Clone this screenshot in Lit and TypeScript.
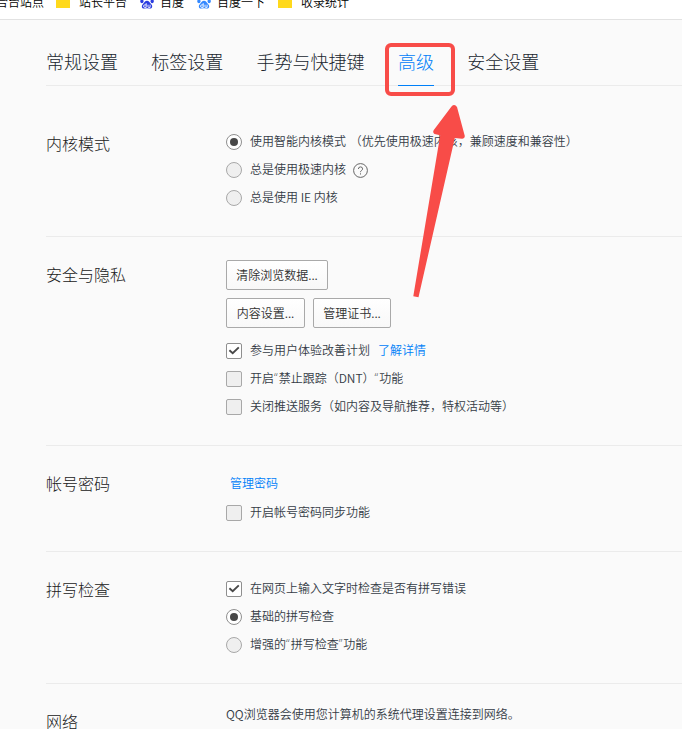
import { LitElement, html, svg, css, nothing } from "lit";
import { customElement, property } from "lit/decorators.js";
import { classMap } from "lit/directives/class-map.js";

const TABS = ["常规设置", "标签设置", "手势与快捷键", "高级", "安全设置"];

@customElement("option-row")
class OptionRow extends LitElement {
  @property() kind: "radio" | "check" = "check";
  @property({ type: Boolean }) checked = false;

  static styles = css`
    :host { display: flex; align-items: center; height: 28px; font-size: 12px; line-height: 16px; white-space: nowrap; }
    .box { box-sizing: border-box; width: 16px; height: 16px; flex: none; margin-right: 8px; border: 1px solid #a8a8a8; border-radius: 2px; background: #efefef; display: grid; place-items: center; }
    .radio { border-radius: 50%; }
    .on { background: #fff; border-color: #8f8f8f; }
    .dot { width: 8px; height: 8px; border-radius: 50%; background: #484848; }
    .tick { display: block; width: 14px; height: 14px; }
    .text { display: flex; align-items: center; padding-bottom: 2px; }
  `;

  render() {
    const mark = !this.checked ? nothing : this.kind === "radio"
      ? html`<span class="dot"></span>`
      : html`<svg class="tick" viewBox="0 0 14 14"><path d="M2.4 6.3 5.7 9.3 11.8 3.4" fill="none" stroke="#484848" stroke-width="1.9"/></svg>`;
    return html`<span class=${classMap({ box: true, radio: this.kind === "radio", on: this.checked })}>${mark}</span><span class="text"><slot></slot></span>`;
  }
}

@customElement("app-root")
class AppRoot extends LitElement {
  static styles = css`
    :host { display: block; position: relative; width: 682px; height: 729px; overflow: hidden; background: #fafafa; color: #353c46; font-family: "Noto Sans CJK SC", "Noto Sans", sans-serif; font-weight: 350; font-size: 12px; }
    .bookmarks { display: flex; height: 19px; overflow: hidden; background: #fff; border-bottom: 1px solid #e2e2e2; color: #000; font-weight: 350; }
    .mark { display: flex; align-items: center; flex: none; height: 16px; margin-top: -6px; line-height: 16px; white-space: nowrap; }
    .folder { width: 14px; height: 14px; margin: -2px 9px 0 0; background: #ffd91c; }
    .paw { width: 14px; height: 14px; margin: 0 6px 0 0; }
    .m0 { width: 60px; margin-left: -4px; }
    .m1 { width: 84px; }
    .m2 { width: 57px; }
    .m3 { width: 81px; }
    .panel { margin-left: 46px; }
    .tabs { display: flex; gap: 33.3px; height: 65px; border-bottom: 1px solid #ebebeb; font-size: 18px; font-weight: 300; line-height: 24px; color: #20262e; }
    .tab { box-sizing: border-box; height: 66px; padding-top: 29px; white-space: nowrap; }
    .active { color: #0080f8; border-bottom: 1px solid #0080f8; }
    .section { display: flex; padding: 23px 0 24px; border-bottom: 1px solid #ebebeb; }
    .kernel { padding-top: 42px; }
    .label { width: 180px; flex: none; margin-top: -1px; font-size: 16px; font-weight: 300; line-height: 31px; color: #202020; }
    .kernel .label { margin-top: 0; }
    .row { display: flex; gap: 8px; margin-bottom: 8px; }
    .wide { margin-bottom: 9px; }
    .btn { box-sizing: border-box; height: 30px; padding: 0; border: 1px solid #a9a9a9; border-radius: 2px; background: linear-gradient(#fff, #f8f8f8); font: inherit; color: #303030; line-height: 28px; text-align: center; }
    .b0 { width: 102px; } .b1 { width: 79px; } .b2 { width: 78px; }
    .link { color: #0080f8; }
    .inline { margin-left: 8px; }
    .alone { height: 30px; line-height: 28px; padding-left: 4px; }
    .help { width: 15px; height: 15px; margin: 2px 0 0 7px; }
    .aside { margin-left: 1px; }
    .quote { font-family: "Open Sans", "Noto Sans", sans-serif; margin-right: 1px; }
    .note { line-height: 16px; margin-top: -1px; white-space: nowrap; }
    .overlay { position: absolute; left: 0; top: 0; pointer-events: none; }
  `;

  paw(color: string) {
    return html`<svg class="paw" viewBox="0 0 14 14">${svg`<g fill=${color}><ellipse cx="5" cy="2.7" rx="1.7" ry="2.4"/><ellipse cx="9.3" cy="2.7" rx="1.7" ry="2.4"/><ellipse cx="1.9" cy="6.2" rx="1.6" ry="2"/><ellipse cx="12.2" cy="6.2" rx="1.6" ry="2"/><path d="M7 5.7C9 5.7 9.5 7.5 11 8.9 13.2 10.9 12.2 13.8 9.7 13.6Q7 13.1 4.3 13.6C1.8 13.8.9 10.9 3 8.9 4.5 7.5 5 5.7 7 5.7Z"/></g><path d="M6.2 8.2v4.2H4.8a1.2 1.2 0 0 1 0-2.5h1.4M8 9.7v2q0 .7.7.7h1.4V9.7" fill="none" stroke="#fff" stroke-width=".9"/>`}</svg>`;
  }

  render() {
    return html`
      <div class="bookmarks">
        <span class="mark m0">合台站点</span>
        <span class="mark m1"><span class="folder"></span>站长平台</span>
        <span class="mark m2">${this.paw("#2a3ce0")}百度</span>
        <span class="mark m3">${this.paw("#3388ff")}百度一下</span>
        <span class="mark"><span class="folder"></span>收录统计</span>
      </div>
      <div class="panel">
        <nav class="tabs">${TABS.map((t) => html`<span class=${classMap({ tab: true, active: t === "高级" })}>${t}</span>`)}</nav>
        <section class="section kernel">
          <div class="label">内核模式</div>
          <div>
            <option-row kind="radio" checked>使用智能内核模式&nbsp;<span class="aside">（优先使用极速内核，兼顾速度和兼容性）</span></option-row>
            <option-row kind="radio">总是使用极速内核<svg class="help" viewBox="0 0 15 15" fill="none" stroke="#666"><circle cx="7.5" cy="7.5" r="6.9"/><path d="M5.4 6Q5.4 3.9 7.5 3.9T9.6 5.9Q9.6 6.8 8.5 7.5 7.5 8.1 7.5 9.2M7.5 10.3v1.2"/></svg></option-row>
            <option-row kind="radio">总是使用 IE 内核</option-row>
          </div>
        </section>
        <section class="section">
          <div class="label">安全与隐私</div>
          <div>
            <div class="row"><button class="btn b0">清除浏览数据...</button></div>
            <div class="row wide"><button class="btn b1">内容设置...</button><button class="btn b2">管理证书...</button></div>
            <option-row checked>参与用户体验改善计划<span class="link inline">了解详情</span></option-row>
            <option-row>开启<span class="quote">“</span>禁止跟踪（DNT）<span class="quote">“</span>功能</option-row>
            <option-row>关闭推送服务（如内容及导航推荐，特权活动等）</option-row>
          </div>
        </section>
        <section class="section">
          <div class="label">帐号密码</div>
          <div>
            <div class="link alone">管理密码</div>
            <option-row>开启帐号密码同步功能</option-row>
          </div>
        </section>
        <section class="section">
          <div class="label">拼写检查</div>
          <div>
            <option-row checked>在网页上输入文字时检查是否有拼写错误</option-row>
            <option-row kind="radio" checked>基础的拼写检查</option-row>
            <option-row kind="radio">增强的<span class="quote">“</span>拼写检查<span class="quote">”</span>功能</option-row>
          </div>
        </section>
        <section class="section">
          <div class="label">网络</div>
          <div class="note">QQ浏览器会使用您计算机的系统代理设置连接到网络。</div>
        </section>
      </div>
      <svg class="overlay" width="682" height="729" viewBox="0 0 682 729">
        <rect x="387" y="45" width="66" height="49" rx="4" fill="none" stroke="#f84c48" stroke-width="4"/>
        <path d="M413.3 296.2 440.2 135.2 434.5 134Q432.3 132.5 433.8 130L451.5 106.5Q454.5 103.5 457 107L464.8 136Q465 139 462 138.8L454.8 138 418.5 297.2Z" fill="#f84c48"/>
      </svg>`;
  }
}
